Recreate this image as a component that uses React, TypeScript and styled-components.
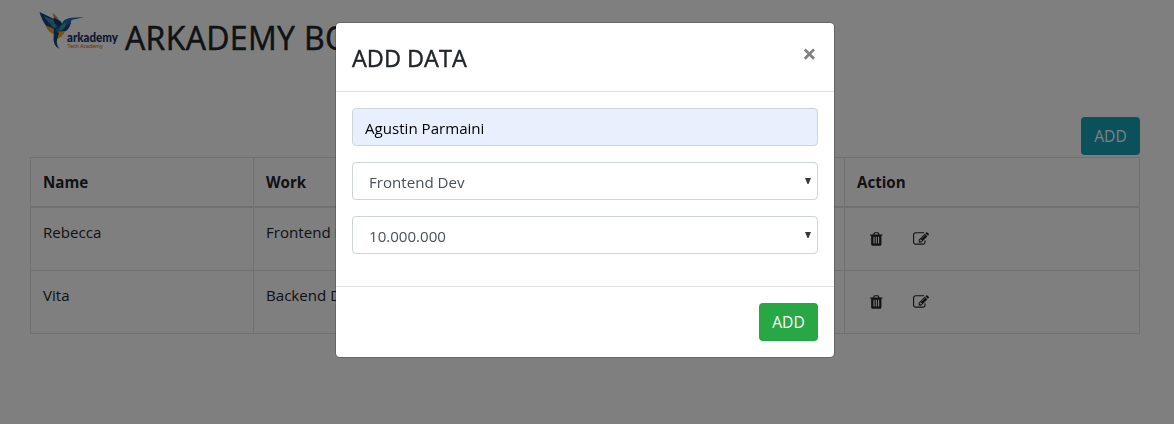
import React from "react";
import styled, { createGlobalStyle, css } from "styled-components";

const GlobalStyle = createGlobalStyle`
  *, *::before, *::after { box-sizing: border-box; }
  body {
    margin: 0;
    background: #fff;
    color: #212529;
    font-family: "Open Sans", "Noto Sans", sans-serif;
    font-size: 15.1px;
    line-height: 24px;
    overflow: hidden;
  }
`;

const Page = styled.div`
  height: 424px;
  padding: 10px 34px 0 30px;
`;

const Brand = styled.header`
  display: flex;
  height: 58px;
  padding-left: 8px;
`;

const Logo = styled.svg`
  flex: none;
  width: 82px;
  height: 42px;
  margin-right: 5px;
  overflow: visible;
`;

const PageTitle = styled.h1`
  margin: 0;
  padding-top: 9px;
  font-size: 32px;
  line-height: 38px;
  font-weight: 500;
  letter-spacing: 0.35px;
  -webkit-text-stroke: 0.5px currentColor;
  white-space: nowrap;
`;

const Toolbar = styled.div`
  display: flex;
  justify-content: flex-end;
  padding: 49px 0 2px;
`;

const Button = styled.button<{ $tone: string }>`
  width: 59px;
  height: 38px;
  padding: 0;
  border: 0;
  border-radius: 4px;
  background: ${(p) => p.$tone};
  color: #fff;
  font: inherit;
  font-size: 15.6px;
`;

const Table = styled.div`
  border: 1px solid #dee2e6;
  border-bottom: 0;
`;

const Row = styled.div<{ $head?: boolean }>`
  display: grid;
  grid-template-columns: 223px 296px 295px 1fr;
  height: 63px;
  border-bottom: 1px solid #dee2e6;
  ${(p) =>
    p.$head &&
    css`
      height: 50px;
      border-bottom-width: 2px;
      font-weight: 700;
    `}
`;

const Cell = styled.div`
  padding: 12px;
  border-right: 1px solid #dee2e6;
  white-space: nowrap;
  &:last-child { border-right: 0; }
`;

const Actions = styled.div`
  display: flex;
  align-items: center;
  height: 38px;
  padding-left: 13px;
  gap: 27px;
`;

const Icon = styled.svg`
  display: block;
  width: 16px;
  height: 16px;
  fill: #212529;
`;

const Backdrop = styled.div`
  position: fixed;
  inset: 0;
  display: flex;
  justify-content: center;
  align-items: flex-start;
  padding: 22px 4px 0 0;
  background: rgba(0, 0, 0, 0.5);
`;

const Modal = styled.div`
  width: 500px;
  height: 336px;
  border: 1px solid rgba(0, 0, 0, 0.2);
  border-radius: 5px;
  background: #fff;
  background-clip: padding-box;
`;

const ModalHeader = styled.div`
  display: flex;
  justify-content: space-between;
  height: 69px;
  padding: 16px;
  border-bottom: 1px solid #dee2e6;
`;

const ModalTitle = styled.h3`
  margin: 0;
  padding-top: 1px;
  font-size: 23.5px;
  line-height: 36px;
  font-weight: 500;
  -webkit-text-stroke: 0.4px currentColor;
`;

const Close = styled.span`
  width: 17px;
  height: 30px;
  color: #7f7f7f;
  font-size: 25px;
  font-weight: 700;
  line-height: 28px;
  text-align: center;
`;

const Form = styled.form`
  display: flex;
  flex-direction: column;
  gap: 16px;
  padding: 16px 16px 32px;
`;

const Field = styled.div<{ $filled?: boolean }>`
  display: flex;
  align-items: center;
  justify-content: space-between;
  height: 38px;
  padding: 1px 6px 0 16px;
  border: 1px solid #ced4da;
  border-radius: 4px;
  color: #495057;
  ${(p) =>
    p.$filled &&
    css`
      padding-left: 12px;
      background: #e8f0fe;
      color: #000;
    `}
`;

const Arrow = styled.svg`
  width: 6px;
  height: 6px;
  margin-top: -2px;
  fill: #343a40;
`;

const ModalFooter = styled.div`
  display: flex;
  justify-content: flex-end;
  padding: 16px;
  border-top: 1px solid #dee2e6;
`;

const TrashIcon = () => (
  <Icon viewBox="192 0 1792 1792">
    <path d="M704 1376v-704q0-14-9-23t-23-9h-64q-14 0-23 9t-9 23v704q0 14 9 23t23 9h64q14 0 23-9t9-23zm256 0v-704q0-14-9-23t-23-9h-64q-14 0-23 9t-9 23v704q0 14 9 23t23 9h64q14 0 23-9t9-23zm256 0v-704q0-14-9-23t-23-9h-64q-14 0-23 9t-9 23v704q0 14 9 23t23 9h64q14 0 23-9t9-23zm-544-992h448l-48-117q-7-9-17-11h-317q-10 2-17 11zm928 32v64q0 14-9 23t-23 9h-96v948q0 83-47 143.5t-113 60.5h-832q-66 0-113-58.5t-47-141.5v-952h-96q-14 0-23-9t-9-23v-64q0-14 9-23t23-9h309l70-167q15-37 54-63t79-26h320q40 0 79 26t54 63l70 167h309q14 0 23 9t9 23z" />
  </Icon>
);

const EditIcon = () => (
  <Icon viewBox="0 0 1792 1792">
    <path d="M888 1184l116-116-152-152-116 116v56h96v96h56zm440-720q-16-16-33 1l-350 350q-17 17-1 33t33-1l350-350q17-17 1-33zm80 594v190q0 119-84.5 203.5t-203.5 84.5h-832q-119 0-203.5-84.5t-84.5-203.5v-832q0-119 84.5-203.5t203.5-84.5h832q63 0 117 25 15 7 18 23 3 17-9 29l-49 49q-14 14-32 8-23-6-45-6h-832q-66 0-113 47t-47 113v832q0 66 47 113t113 47h832q66 0 113-47t47-113v-126q0-13 9-22l64-64q15-15 35-7t20 29zm-96-738l288 288-672 672h-288v-288zm444 132l-92 92-288-288 92-92q28-28 68-28t68 28l152 152q28 28 28 68t-28 68z" />
  </Icon>
);

const BrandLogo = () => (
  <Logo viewBox="38 10 82 42">
    <path fill="#17457f" d="M39.500 12 53 18.500 60 27l-5 6-8-6q-5-6-7.500-15z" />
    <path fill="#3c86b8" d="m43 16 10 3.500 5 7-4 2z" />
    <path fill="#f19a25" d="m45.500 25.500 7 2.500 4 5-1 1.500q-7-1-10-9z" />
    <path fill="#e08a2b" d="m52.500 12.500 5 5 1.500 4-5-3z" />
    <path fill="#123a70" d="m53.500 17.500 7 3.500 3 5-4 3-5-6z" />
    <path fill="#1c6cae" d="M62 24q1-4 4.500-5 2-.8 5-1.200L84.500 17l-13 3q-1 6-5 9l-8 5-3-4z" />
    <path fill="#39a59a" d="m61 26 5-3.500-1 5-6 4z" />
    <path fill="#17457f" d="m66 26 5-4q-1 6-5 9l-6 2z" />
    <path fill="#f2a71e" d="m56 32 9-1q-1 5-8 8l-2-2z" />
    <path fill="#17457f" d="m54 29 5 4-2 7q-1 4 2.500 9-6-3-6-10z" />
    <text x="67" y="41.500" fill="#14315f" fontFamily="Lato" fontSize="12.500" fontWeight="900" textLength="51" lengthAdjust="spacingAndGlyphs">arkademy</text>
    <text x="67.500" y="48" fill="#e88a32" stroke="#e88a32" strokeWidth="0.2" fontSize="5.800" textLength="35" lengthAdjust="spacingAndGlyphs">Tech Academy</text>
  </Logo>
);

const DropArrow = () => (
  <Arrow viewBox="0 0 6 6">
    <path d="M0 0h6L3.500 6h-1z" />
  </Arrow>
);

const people = [
  { name: "Rebecca", work: "Frontend Dev" },
  { name: "Vita", work: "Backend Dev" },
];

export default function App() {
  return (
    <>
      <GlobalStyle />
      <Page>
        <Brand>
          <BrandLogo />
          <PageTitle>ARKADEMY BOOTCAMP</PageTitle>
        </Brand>
        <Toolbar>
          <Button $tone="#17a2b8">ADD</Button>
        </Toolbar>
        <Table>
          <Row $head>
            <Cell>Name</Cell>
            <Cell>Work</Cell>
            <Cell />
            <Cell>Action</Cell>
          </Row>
          {people.map((p) => (
            <Row key={p.name}>
              <Cell>{p.name}</Cell>
              <Cell>{p.work}</Cell>
              <Cell />
              <Cell>
                <Actions>
                  <TrashIcon />
                  <EditIcon />
                </Actions>
              </Cell>
            </Row>
          ))}
        </Table>
      </Page>
      <Backdrop>
        <Modal>
          <ModalHeader>
            <ModalTitle>ADD DATA</ModalTitle>
            <Close>×</Close>
          </ModalHeader>
          <Form>
            <Field $filled>Agustin Parmaini</Field>
            <Field>
              Frontend Dev
              <DropArrow />
            </Field>
            <Field>
              10.000.000
              <DropArrow />
            </Field>
          </Form>
          <ModalFooter>
            <Button $tone="#28a745">ADD</Button>
          </ModalFooter>
        </Modal>
      </Backdrop>
    </>
  );
}
